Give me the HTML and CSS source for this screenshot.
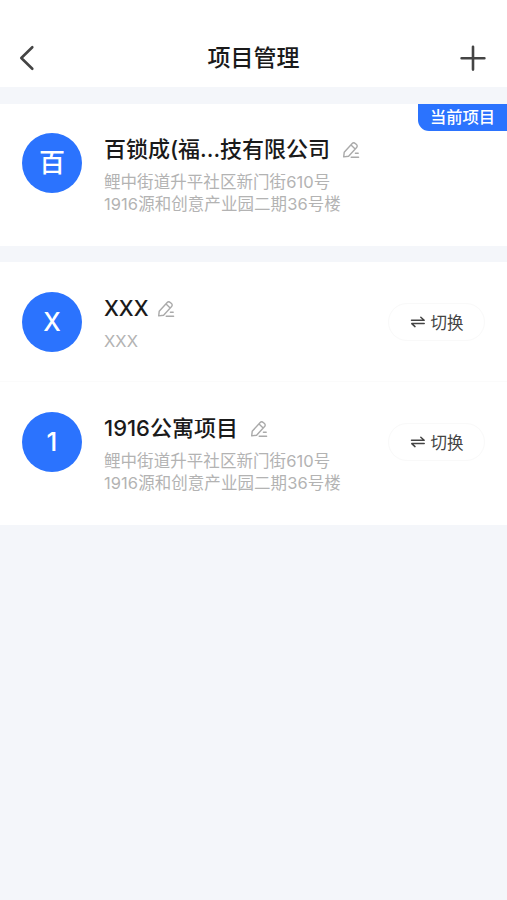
FILE: index.html
```html
<!DOCTYPE html>
<html lang="zh-CN">
<head>
  <meta charset="UTF-8">
  <meta name="viewport" content="width=device-width, initial-scale=1.0">
  <title>项目管理</title>
  <link rel="stylesheet" href="styles.css">
</head>
<body>
  <svg class="sprite" width="0" height="0">
    <symbol id="icon-edit" viewBox="0 0 18 18">
      <path d="M1.7 15.9l.5-4.6 8-8.8a2.1 2.1 0 0 1 3-.1l1.3 1.2a2.1 2.1 0 0 1 .1 3l-8 8.6-4.9.7zM9.3 4.3l3.6 3.4M13.4 12.2h2.8M9.2 16.2h7.4"/>
    </symbol>
    <symbol id="icon-switch" viewBox="0 0 16 14">
      <path d="M1.5 5.2h12.7L10.8 2.2M14.2 8.6H1.8L5 11.6"/>
    </symbol>
  </svg>

  <header class="navbar">
    <button class="nav-btn" aria-label="返回">
      <svg width="16" height="26" viewBox="0 0 16 26"><path d="M13.3 2.2L2.3 13l11 10.8"/></svg>
    </button>
    <h1>项目管理</h1>
    <button class="nav-btn" aria-label="添加">
      <svg class="plus" width="26" height="26" viewBox="0 0 26 26"><path d="M13 1.8v22.8M1.6 13.2h22.8"/></svg>
    </button>
  </header>

  <section class="group">
    <div class="project current">
      <span class="tag">当前项目</span>
      <div class="avatar">百</div>
      <div class="info">
        <h2><span>百锁成(福...技有限公司</span><svg class="edit"><use href="#icon-edit"/></svg></h2>
        <p>鲤中街道升平社区新门街610号<br>1916源和创意产业园二期36号楼</p>
      </div>
    </div>
  </section>

  <section class="group">
    <div class="project short">
      <div class="avatar latin">X</div>
      <div class="info">
        <h2><span class="latin">XXX</span><svg class="edit"><use href="#icon-edit"/></svg></h2>
        <p>XXX</p>
      </div>
      <button class="switch"><svg><use href="#icon-switch"/></svg>切换</button>
    </div>
    <div class="project">
      <div class="avatar">1</div>
      <div class="info">
        <h2><span>1916公寓项目</span><svg class="edit"><use href="#icon-edit"/></svg></h2>
        <p>鲤中街道升平社区新门街610号<br>1916源和创意产业园二期36号楼</p>
      </div>
      <button class="switch"><svg><use href="#icon-switch"/></svg>切换</button>
    </div>
  </section>
</body>
</html>
```
FILE: styles.css
```css
* {
  box-sizing: border-box;
}

body {
  margin: 0;
  min-height: 100vh;
  background: #f4f6fa;
  color: #1a1a1a;
  font-family: Inter, "Noto Sans CJK SC", sans-serif;
}

h1, h2, p {
  margin: 0;
}

button {
  border: none;
  background: none;
  padding: 0;
  font-family: inherit;
  cursor: pointer;
}

svg {
  display: block;
  fill: none;
  stroke: currentColor;
  stroke-linecap: round;
  stroke-linejoin: round;
}

.sprite {
  position: absolute;
}

.navbar {
  display: flex;
  align-items: center;
  justify-content: space-between;
  height: 87px;
  padding: 30px 21px 2px 19px;
  background: #fff;
}

.navbar h1 {
  font-size: 23px;
  line-height: 32px;
  font-weight: 500;
  margin-left: 12px;
  padding-top: 1px;
}

.nav-btn {
  color: #444;
}

.nav-btn svg {
  stroke-width: 2.6;
}

.group {
  margin-top: 17px;
  background: #fff;
}

.group + .group {
  margin-top: 16px;
}

.project {
  position: relative;
  display: flex;
  align-items: flex-start;
  height: 143px;
  padding: 30px 22px 0;
}

.project.current {
  height: 142px;
  padding-top: 29px;
}

.project.short {
  height: 120px;
  border-bottom: 1px solid #fbfbfb;
}

.avatar {
  flex: none;
  width: 60px;
  height: 60px;
  border-radius: 50%;
  background: #2b73fe;
  color: #fff;
  font-size: 26px;
  font-weight: 500;
  line-height: 60px;
  text-align: center;
}

.avatar.latin {
  font-size: 25px;
}

.info {
  flex: 1;
  margin-left: 22px;
}

.info h2 {
  display: flex;
  align-items: center;
  height: 32px;
  font-size: 22px;
  font-weight: 500;
  line-height: 32px;
}

.info h2 .latin {
  font-size: 21.2px;
}

.info p {
  margin-top: 7px;
  color: #b3b3b3;
  font-size: 16.5px;
  line-height: 21.5px;
  letter-spacing: 0.06px;
}

.edit {
  width: 18px;
  height: 18px;
  margin: 1px 0 0 12px;
  color: #aaa;
  stroke-width: 1.4;
}

.short .edit {
  margin-left: 8px;
}

.tag {
  position: absolute;
  top: 0;
  right: 0;
  width: 89px;
  height: 27px;
  border-bottom-left-radius: 11px;
  background: #2b73fe;
  color: #fff;
  font-size: 16.3px;
  font-weight: 500;
  line-height: 27px;
  text-align: center;
}

.switch {
  display: flex;
  align-items: center;
  justify-content: center;
  gap: 5px;
  width: 97px;
  height: 38px;
  margin-top: 11px;
  border: 1px solid #f9f9f9;
  border-radius: 19px;
  color: #444;
  font-size: 16.5px;
}

.switch svg {
  width: 16px;
  height: 14px;
  stroke-width: 1.5;
}
```
